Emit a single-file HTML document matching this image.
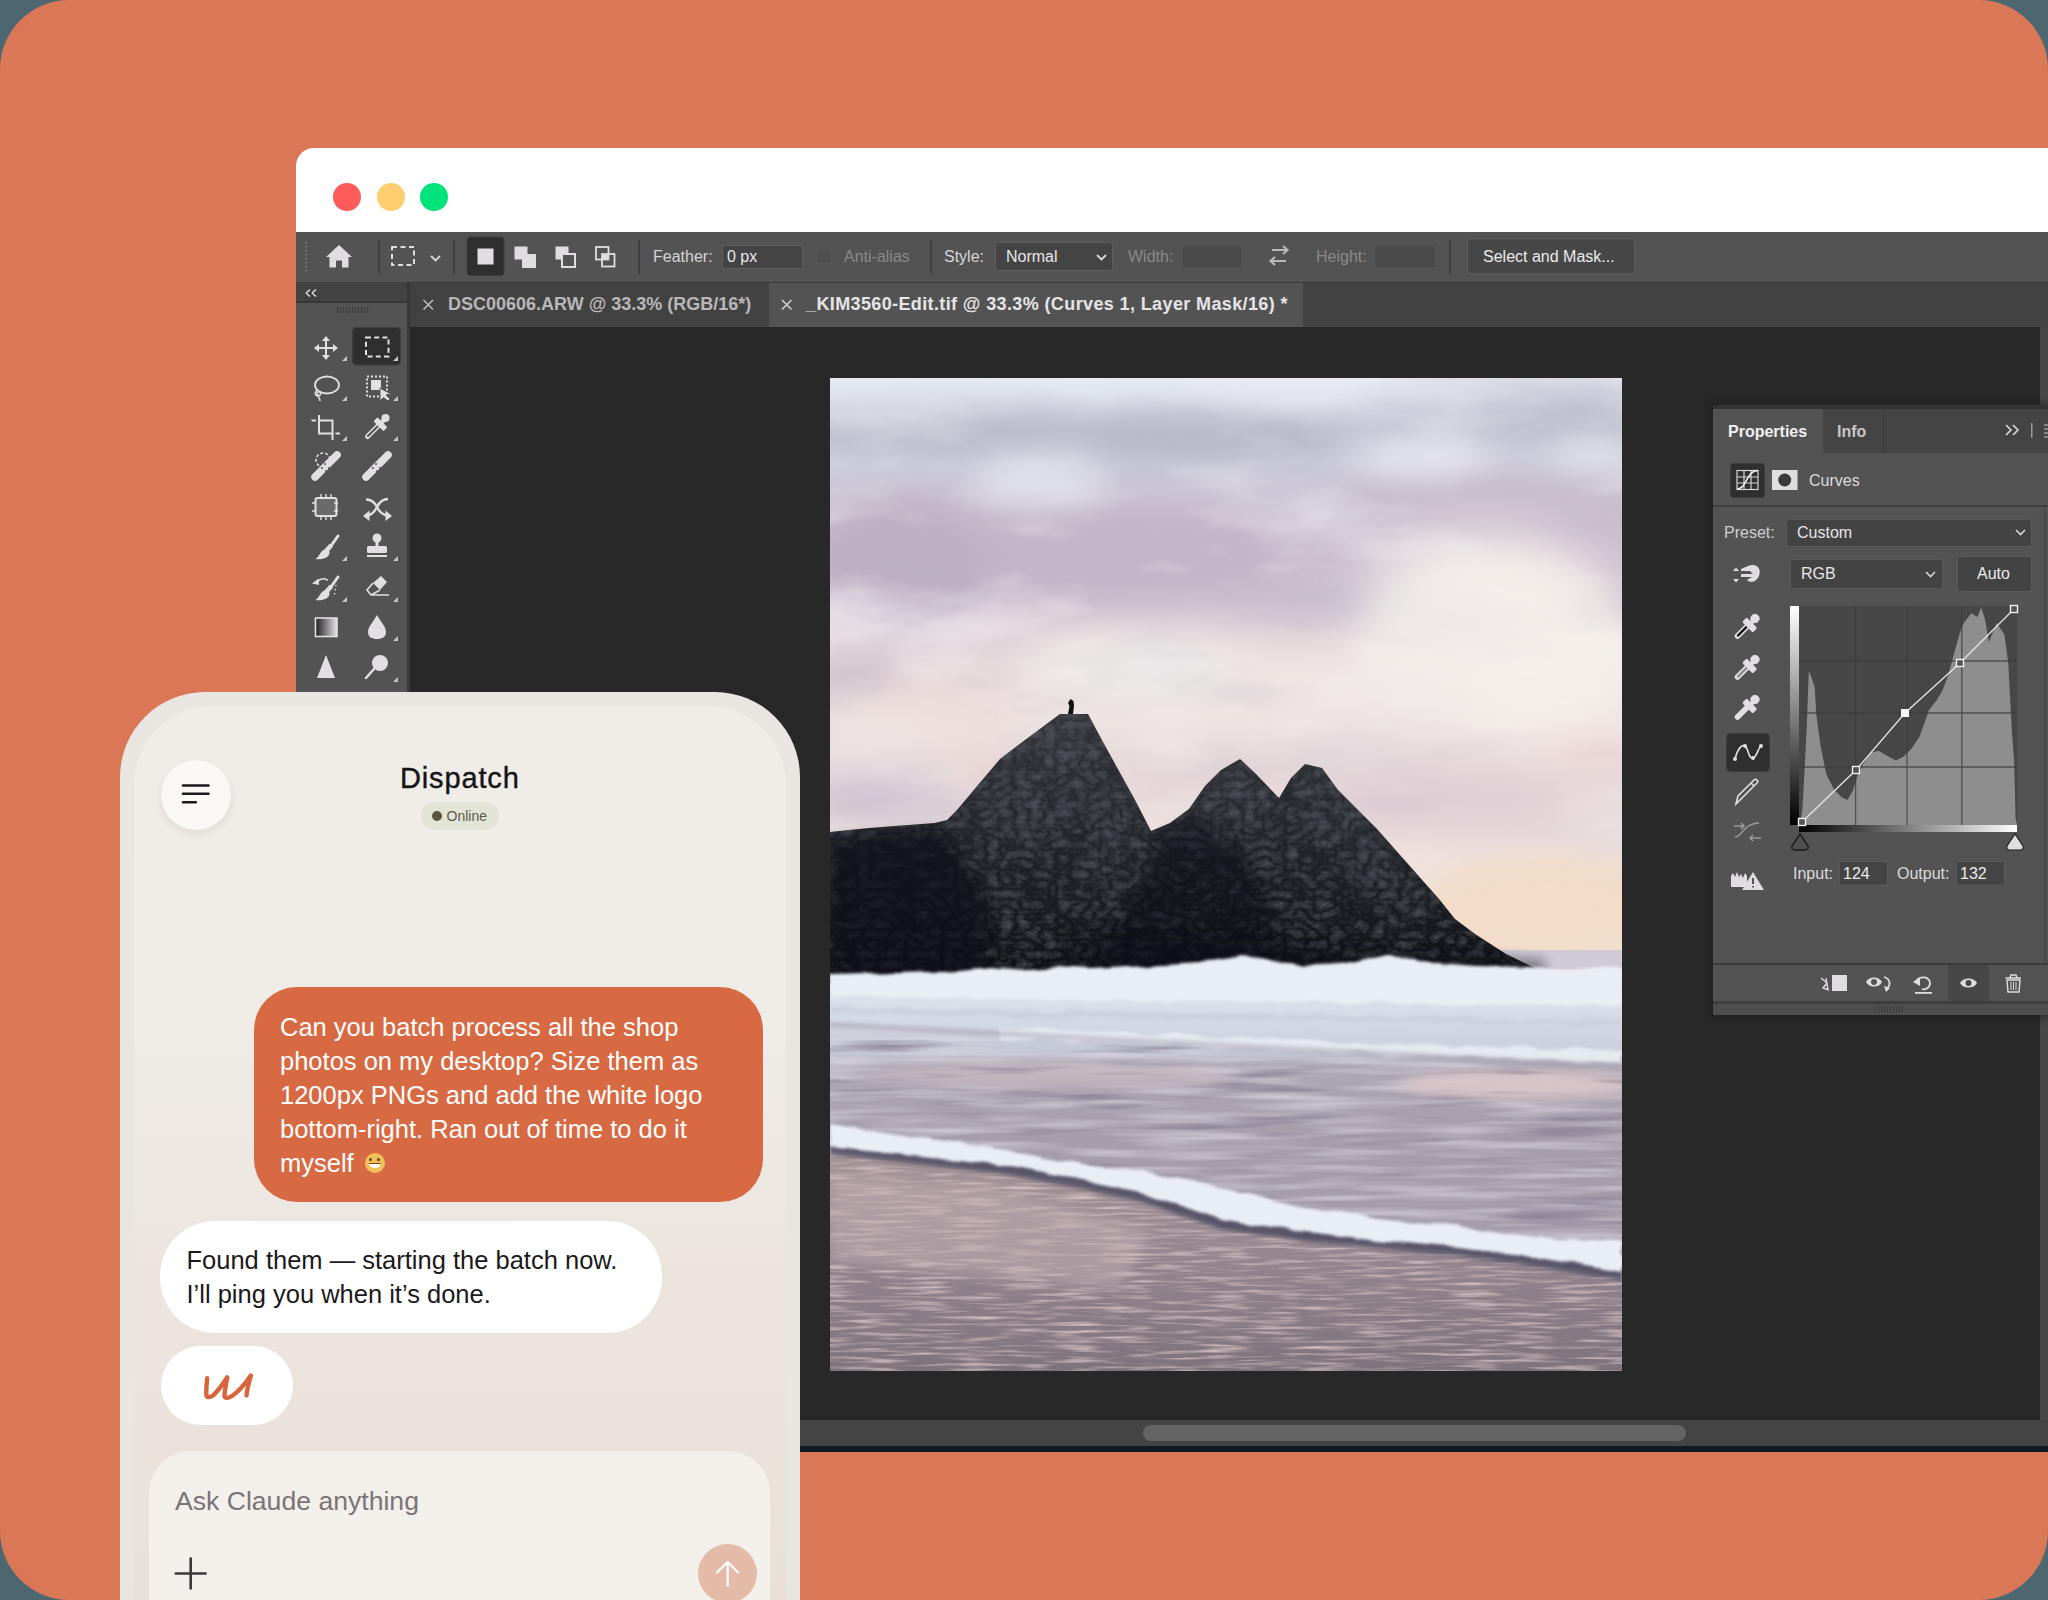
<!DOCTYPE html>
<html><head><meta charset="utf-8">
<style>
*{box-sizing:border-box;margin:0;padding:0}
html,body{width:2048px;height:1600px;overflow:hidden;background:#4d6770;font-family:"Liberation Sans",sans-serif}
.a{position:absolute}
#bg{position:absolute;left:0;top:0;width:2048px;height:1600px;background:#d97757;border-radius:69px}
#win{position:absolute;left:296px;top:148px;width:1752px;height:1304px;border-top-left-radius:18px;overflow:hidden;background:#282828}
.tl{position:absolute;top:183px;width:28px;height:28px;border-radius:50%}
.t{position:absolute;white-space:nowrap;font-size:16px;color:#d8d6d8;line-height:1}
.sep{position:absolute;width:2px;background:#3e3e3e}
#phone{position:absolute;left:120px;top:692px;width:680px;height:1100px;border-radius:85px;background:#e9e5e0}
#screen{position:absolute;left:134px;top:706px;width:652px;height:1100px;border-radius:78px;background:linear-gradient(#f0ece7 0%,#efebe6 30%,#ebe3dc 60%,#e8ddd4 100%);overflow:hidden}
</style></head><body>
<div id="bg"></div>

<!-- title bar -->
<div class="a" style="left:296px;top:148px;width:1752px;height:84px;background:#fff;border-top-left-radius:18px"></div>
<div class="tl" style="left:333px;background:#fd5c5a"></div>
<div class="tl" style="left:377px;background:#fdcf6e"></div>
<div class="tl" style="left:420px;background:#00e27a"></div>
<div class="a" style="left:296px;top:232px;width:1752px;height:1220px;background:#282828"></div>
<!-- toolbar -->
<div class="a" style="left:296px;top:232px;width:1752px;height:50px;background:#535353"></div>
<svg class="a" style="left:296px;top:232px" width="1752" height="50" viewBox="296 232 1752 50">
<g fill="#7a7a7a"><rect x="305" y="242" width="2" height="1.5"/><rect x="305" y="246" width="2" height="1.5"/><rect x="305" y="250" width="2" height="1.5"/><rect x="305" y="254" width="2" height="1.5"/><rect x="305" y="258" width="2" height="1.5"/><rect x="305" y="262" width="2" height="1.5"/><rect x="305" y="266" width="2" height="1.5"/><rect x="305" y="270" width="2" height="1.5"/></g>
<path fill="#e0dde0" d="M339 245 L352 257 L348.5 257 L348.5 267.5 L342 267.5 L342 260.5 L336 260.5 L336 267.5 L329.5 267.5 L329.5 257 L326 257 Z"/>
<rect x="378" y="240" width="2" height="34" fill="#3f3f3f"/>
<rect x="392" y="247" width="22" height="18" fill="none" stroke="#e0dde0" stroke-width="2" stroke-dasharray="5 3.5"/>
<path d="M431 256 L435.5 260.5 L440 256" fill="none" stroke="#d8d6d8" stroke-width="1.8"/>
<rect x="453" y="240" width="2" height="34" fill="#3f3f3f"/>
<rect x="467" y="237" width="37" height="38.5" rx="3" fill="#2f2f2f" stroke="#3e3e3e" stroke-width="1"/>
<rect x="477.5" y="248.5" width="16" height="16" fill="#e0dde0"/>
<rect x="514.5" y="246.5" width="13" height="13" fill="#e0dde0"/><rect x="522" y="254" width="14" height="14" fill="#e0dde0"/>
<rect x="555.5" y="246.5" width="13" height="13" fill="#e0dde0"/><rect x="562" y="254" width="13" height="13" fill="#535353" stroke="#e0dde0" stroke-width="2"/>
<rect x="596" y="247" width="12.5" height="12.5" fill="none" stroke="#e0dde0" stroke-width="1.8"/><rect x="602" y="254" width="12.5" height="12.5" fill="none" stroke="#e0dde0" stroke-width="1.8"/><rect x="602.5" y="254.5" width="6" height="5" fill="#e0dde0"/>
<rect x="638" y="240" width="2" height="34" fill="#3f3f3f"/>
<rect x="722.5" y="245.5" width="80" height="23" fill="#444" stroke="#5e5e5e" stroke-width="1"/>
<rect x="817" y="249" width="14" height="14.5" rx="3" fill="#4e4e4e" stroke="#5a5a5a" stroke-width="1"/>
<rect x="930" y="240" width="2" height="34" fill="#3f3f3f"/>
<rect x="995.5" y="242.5" width="117" height="28" rx="3" fill="#444" stroke="#5e5e5e" stroke-width="1"/>
<path d="M1097 255 L1101.5 259.5 L1106 255" fill="none" stroke="#d8d6d8" stroke-width="1.8"/>
<rect x="1181.5" y="245" width="61" height="23" fill="#4a4a4a" stroke="#5a5a5a" stroke-width="1"/>
<path d="M1272 250 L1287 250 M1283 246 L1287.5 250 L1283 254 M1286 261 L1271 261 M1275 257 L1270.5 261 L1275 265" fill="none" stroke="#b8b8b8" stroke-width="2.2"/>
<rect x="1374.5" y="245" width="61" height="23" fill="#4a4a4a" stroke="#5a5a5a" stroke-width="1"/>
<rect x="1449" y="240" width="2" height="34" fill="#3f3f3f"/>
<rect x="1467.5" y="239" width="167" height="35" rx="3" fill="#474747" stroke="#5e5e5e" stroke-width="1"/>
</svg>
<div class="t" style="left:653px;top:249px;font-size:16px;color:#d6d4d6">Feather:</div>
<div class="t" style="left:727px;top:249px;font-size:16px;color:#e8e6e8">0 px</div>
<div class="t" style="left:844px;top:249px;font-size:16px;color:#8a888a">Anti-alias</div>
<div class="t" style="left:944px;top:249px;font-size:16px;color:#d6d4d6">Style:</div>
<div class="t" style="left:1006px;top:249px;font-size:16px;color:#e8e6e8">Normal</div>
<div class="t" style="left:1128px;top:249px;font-size:16px;color:#8a888a">Width:</div>
<div class="t" style="left:1316px;top:249px;font-size:16px;color:#8a888a">Height:</div>
<div class="t" style="left:1483px;top:249px;font-size:16px;color:#eceaec">Select and Mask...</div>
<!-- tab row -->
<div class="a" style="left:410px;top:282px;width:1638px;height:45px;background:#424242"></div>
<div class="a" style="left:769px;top:283px;width:534px;height:44px;background:#535353"></div>
<div class="a" style="left:410px;top:282px;width:1638px;height:1px;background:#3a3a3a"></div>
<svg class="a" style="left:410px;top:282px" width="900" height="45" viewBox="410 282 900 45">
<path d="M423.5 300 L433 309.5 M433 300 L423.5 309.5" stroke="#bdbbbd" stroke-width="1.6"/>
<path d="M782 300 L791.5 309.5 M791.5 300 L782 309.5" stroke="#d0ced0" stroke-width="1.6"/>
</svg>
<div class="t" style="left:448px;top:295px;font-size:18px;font-weight:bold;color:#b9b7b9">DSC00606.ARW @ 33.3% (RGB/16*)</div>
<div class="t" style="left:806px;top:295px;font-size:18px;font-weight:bold;color:#e6e4e6;letter-spacing:.38px">_KIM3560-Edit.tif @ 33.3% (Curves 1, Layer Mask/16) *</div>
<!-- canvas -->

<!-- scroll -->
<div class="a" style="left:410px;top:1420px;width:1638px;height:26px;background:#444"></div>
<div class="a" style="left:1143px;top:1425px;width:543px;height:16px;border-radius:8px;background:#646464"></div>
<div class="a" style="left:296px;top:1446px;width:1752px;height:6px;background:#0f1a22"></div>
<!-- tools panel -->
<div class="a" style="left:296px;top:282px;width:111px;height:20px;background:#424242"></div>
<div class="a" style="left:296px;top:302px;width:111px;height:1150px;background:#535353"></div>
<div class="a" style="left:407px;top:282px;width:3px;height:1170px;background:#383838"></div>
<div class="a" style="left:296px;top:301px;width:111px;height:1.5px;background:#393939"></div>
<svg class="a" style="left:296px;top:282px" width="114" height="420" viewBox="296 282 114 420">
<defs><linearGradient id="gradtool" x1="0" x2="1"><stop offset="0" stop-color="#1e1e1e"/><stop offset="1" stop-color="#e6e2e6"/></linearGradient>
<path id="tri" d="M0 0 L-5 5 L0 5 Z" fill="#c8c6c8"/></defs>
<path d="M306 293 L310 289.5 M306 293 L310 296.5 M312 293 L316 289.5 M312 293 L316 296.5" stroke="#dcdadc" stroke-width="1.6" fill="none"/>
<g fill="#3e3e3e"><rect x="337" y="307" width="1.2" height="6"/><rect x="340" y="307" width="1.2" height="6"/><rect x="343" y="307" width="1.2" height="6"/><rect x="346" y="307" width="1.2" height="6"/><rect x="349" y="307" width="1.2" height="6"/><rect x="352" y="307" width="1.2" height="6"/><rect x="355" y="307" width="1.2" height="6"/><rect x="358" y="307" width="1.2" height="6"/><rect x="361" y="307" width="1.2" height="6"/><rect x="364" y="307" width="1.2" height="6"/><rect x="367" y="307" width="1.2" height="6"/></g>
<rect x="352.5" y="327.5" width="48" height="37.5" rx="4" fill="#2f2f2f" stroke="#3f3f3f"/>
<g fill="#e2dfe2" stroke="#e2dfe2">
<!-- move -->
<path d="M326 337 L326 359 M315 348 L337 348" stroke-width="2" fill="none"/>
<path d="M326 336 L330 341 L322 341 Z M326 360 L330 355 L322 355 Z M314 348 L319 344 L319 352 Z M338 348 L333 344 L333 352 Z" stroke="none"/>
<!-- marquee -->
<rect x="366" y="337.5" width="22.5" height="19" fill="none" stroke-width="2" stroke-dasharray="5 3.2"/>
<!-- lasso -->
<ellipse cx="327" cy="385" rx="12" ry="8.5" fill="none" stroke-width="1.8"/>
<path d="M317 390 C313 394 317 398 320 395 C322 393 319 390 317 393 C318 397 320 398 320 401" fill="none" stroke-width="1.5"/>
<!-- object select -->
<rect x="367" y="376.5" width="20" height="20" fill="none" stroke-width="2" stroke-dasharray="2 2"/>
<rect x="371" y="380" width="10" height="10" stroke="none"/>
<path d="M380 388 L380 401 L383.5 397.5 L388 401 L390 399 L386 395 L391 394 Z" stroke="#535353" stroke-width="1"/>
<!-- crop -->
<path d="M311.5 420.5 L316 420.5 M319 415 L319 433.5 L332.5 433.5 M335.5 433.5 L340 433.5 M319 420.5 L332.5 420.5 L332.5 440" fill="none" stroke-width="2"/>
<!-- eyedropper -->
<path d="M367.5 436.5 L378 426" stroke-width="5" stroke-linecap="round" fill="none"/>
<path d="M368 436 L377.5 426.5" stroke="#535353" stroke-width="2" stroke-linecap="round" fill="none"/>
<rect x="373.5" y="421.5" width="14" height="5.5" rx="1" transform="rotate(45 380.5 424.2)" stroke="none"/>
<circle cx="385.5" cy="418" r="4" stroke="none"/>
<path d="M381 423 L385 419" stroke-width="4.5" fill="none"/>
<!-- spot heal -->
<circle cx="323" cy="460" r="7" fill="none" stroke-width="1.6" stroke-dasharray="3 2"/>
<path d="M315 477 L337 455" stroke-width="7.5" stroke-linecap="round" fill="none"/>
<!-- heal -->
<path d="M366 477 L388 455" stroke-width="7.5" stroke-linecap="round" fill="none"/>
<!-- chip -->
<rect x="315.5" y="498" width="21" height="18" rx="2" fill="#6a6a6a" stroke-width="2"/>
<path d="M321 494 L321 521 M326 494 L326 521 M331 494 L331 521 M312 503 L340 503 M312 511 L340 511" stroke-width="1.4" fill="none" stroke-dasharray="4 18"/>
<!-- shuffle -->
<path d="M366 499.5 C372 499.5 375 503 377 507 C379 511 382 515 388 515.5" fill="none" stroke-width="2.4"/>
<path d="M388 499 C382 499 379 503 377 507 C375 511 372 515 367 515.5" fill="none" stroke-width="2.4"/>
<path d="M392 516 L385.5 510.5 L385.5 521 Z M363 516 L369.5 510.5 L369.5 521 Z" stroke="none"/>
<!-- brush -->
<path d="M338 536 L329.5 548" stroke-width="3" stroke-linecap="round" fill="none"/>
<path d="M331.5 545 L326.5 550.5" stroke-width="4.5" fill="none"/>
<path d="M325 549 C320 551 320 556 315.5 559 C322 560 329 558 329.5 553 C330 551 327 548 325 549 Z" stroke="none"/>
<!-- stamp -->
<circle cx="377" cy="538" r="4.5" stroke="none"/>
<rect x="375.5" y="541" width="3" height="6" stroke="none"/>
<rect x="367" y="546" width="20" height="7" rx="1.5" stroke="none"/>
<rect x="367" y="555" width="20" height="2" stroke="none"/>
<!-- history brush -->
<path d="M338 577 L329.5 589" stroke-width="3" stroke-linecap="round" fill="none"/>
<path d="M331.5 586 L326.5 591.5" stroke-width="4.5" fill="none"/>
<path d="M325 590 C320 592 320 597 315.5 600 C322 601 329 599 329.5 594 C330 592 327 589 325 590 Z" stroke="none"/>
<path d="M312 583.5 L318.5 578.5 L319 585 Z" stroke="none"/>
<path d="M317.5 581.5 C321 578 325.5 578 328 580.5" fill="none" stroke-width="1.6"/>
<path d="M336 585 L334 597" stroke-width="1.4" stroke-dasharray="1.5 2.5" fill="none"/>
<!-- eraser -->
<path d="M373 583 L381 576 L387 582 L380 590 Z" stroke="none"/>
<path d="M373 583 L367 590 L371 595 L389 595 M371 595 L380 590" fill="none" stroke-width="1.6"/>
<!-- gradient -->
<rect x="315.5" y="618" width="21.5" height="18.5" fill="url(#gradtool)" stroke-width="1.6"/>
<!-- drop -->
<path d="M377 615 C373 622 368 627 368 632 C368 637 372 639 377 639 C382 639 386 637 386 632 C386 627 381 622 377 615 Z" stroke="none"/>
<!-- triangle -->
<path d="M326 655 L335 678 L317 678 Z" stroke="none"/>
<!-- dodge -->
<circle cx="380" cy="663" r="8" stroke="none"/>
<path d="M374 669 L366 678" stroke-width="2.5" stroke-linecap="round" fill="none"/>
</g>
<g>
<use href="#tri" x="347" y="356"/><use href="#tri" x="398" y="356"/>
<use href="#tri" x="347" y="396"/><use href="#tri" x="398" y="396"/>
<use href="#tri" x="347" y="436"/><use href="#tri" x="398" y="436"/>
<use href="#tri" x="347" y="556"/><use href="#tri" x="398" y="556"/>
<use href="#tri" x="347" y="597"/><use href="#tri" x="398" y="597"/>
<use href="#tri" x="398" y="636"/><use href="#tri" x="398" y="677"/>
</g>
<g fill="#535353"><circle cx="320" cy="466" r="0"/></g>
<g fill="#5a5a5a"><circle cx="325" cy="464" r="1.1"/><circle cx="329" cy="468" r="1.1"/><circle cx="322" cy="468" r="1.1"/><circle cx="326" cy="471" r="1.1"/><circle cx="376" cy="464" r="1.1"/><circle cx="380" cy="468" r="1.1"/><circle cx="373" cy="468" r="1.1"/><circle cx="377" cy="471" r="1.1"/></g>
</svg>

<svg class="a" style="left:830px;top:378px" width="792" height="993" viewBox="830 378 792 993">
<defs>
<linearGradient id="sky" x1="0" y1="378" x2="0" y2="1371" gradientUnits="userSpaceOnUse">
<stop offset="0.0000" stop-color="#e6ebf2"/>
<stop offset="0.0222" stop-color="#dde1ea"/>
<stop offset="0.0524" stop-color="#c8c8d6"/>
<stop offset="0.0826" stop-color="#d0d1de"/>
<stop offset="0.1430" stop-color="#c9bdce"/>
<stop offset="0.2236" stop-color="#d0c3d0"/>
<stop offset="0.2739" stop-color="#e3d6da"/>
<stop offset="0.3444" stop-color="#ece1e0"/>
<stop offset="0.4048" stop-color="#e6d8da"/>
<stop offset="0.4753" stop-color="#efe2de"/>
<stop offset="0.5861" stop-color="#f3e0d0"/>
<stop offset="1.0000" stop-color="#f3e0d0"/>
</linearGradient>
<filter id="blur20" x="-50%" y="-50%" width="200%" height="200%"><feGaussianBlur stdDeviation="16"/></filter>
<filter id="blur8" x="-50%" y="-50%" width="200%" height="200%"><feGaussianBlur stdDeviation="6"/></filter>
<filter id="blur3" x="-20%" y="-50%" width="140%" height="200%"><feGaussianBlur stdDeviation="2"/></filter>
<filter id="blur15" x="-20%" y="-50%" width="140%" height="200%"><feGaussianBlur stdDeviation="1.2"/></filter>
<filter id="rock" x="0" y="0" width="100%" height="100%" color-interpolation-filters="sRGB">
<feTurbulence type="turbulence" baseFrequency="0.07 0.1" numOctaves="3" seed="11" result="n"/>
<feColorMatrix in="n" type="matrix" values="0 0 0 0 0.40  0 0 0 0 0.41  0 0 0 0 0.45  0.9 0 0 0 -0.12" result="m"/>
<feComposite in="m" in2="SourceGraphic" operator="in" result="c"/>
<feMerge><feMergeNode in="SourceGraphic"/><feMergeNode in="c"/></feMerge>
</filter>
<filter id="ripple" x="0" y="0" width="100%" height="100%" color-interpolation-filters="sRGB">
<feTurbulence type="fractalNoise" baseFrequency="0.02 0.3" numOctaves="2" seed="7" result="n"/>
<feColorMatrix in="n" type="matrix" values="0 0 0 0 0.84  0 0 0 0 0.76  0 0 0 0 0.76  0 0 0 2.2 -1.0" result="m"/>
<feComposite in="m" in2="SourceGraphic" operator="in" result="c"/>
<feMerge><feMergeNode in="SourceGraphic"/><feMergeNode in="c"/></feMerge>
</filter>
<filter id="streak" x="0" y="0" width="100%" height="100%" color-interpolation-filters="sRGB">
<feTurbulence type="fractalNoise" baseFrequency="0.008 0.12" numOctaves="2" seed="4" result="n"/>
<feColorMatrix in="n" type="matrix" values="0 0 0 0 0.88  0 0 0 0 0.86  0 0 0 0 0.9  0 0 0 1.5 -0.62" result="m"/>
<feComposite in="m" in2="SourceGraphic" operator="in" result="c"/>
<feMerge><feMergeNode in="SourceGraphic"/><feMergeNode in="c"/></feMerge>
</filter>
<linearGradient id="rockg" x1="0" y1="0" x2="0" y2="1">
<stop offset="0" stop-color="#323338"/>
<stop offset="0.35" stop-color="#26282d"/>
<stop offset="0.7" stop-color="#181b1f"/>
<stop offset="1" stop-color="#0d1013"/>
</linearGradient>
<linearGradient id="sea" x1="0" y1="0" x2="0" y2="1">
<stop offset="0" stop-color="#dfe4ec"/>
<stop offset="0.1" stop-color="#d2d8e2"/>
<stop offset="0.23" stop-color="#c3c7d3"/>
<stop offset="0.27" stop-color="#aea7b4"/>
<stop offset="0.5" stop-color="#a69dab"/>
<stop offset="1" stop-color="#a69dab"/>
</linearGradient>
<linearGradient id="sand" x1="0" y1="0" x2="0" y2="1">
<stop offset="0" stop-color="#a59498"/>
<stop offset="0.45" stop-color="#958690"/>
<stop offset="1" stop-color="#7e737d"/>
</linearGradient>
<filter id="cloudtex" x="0" y="0" width="100%" height="100%" color-interpolation-filters="sRGB">
<feTurbulence type="fractalNoise" baseFrequency="0.004 0.012" numOctaves="4" seed="21" result="n"/>
<feColorMatrix in="n" type="matrix" values="0 0 0 0 0.72  0 0 0 0 0.7  0 0 0 0 0.78  2.2 0 0 0 -1.05" result="m"/>
<feComposite in="m" in2="SourceGraphic" operator="in"/>
</filter>
<filter id="cloudtex2" x="0" y="0" width="100%" height="100%" color-interpolation-filters="sRGB">
<feTurbulence type="fractalNoise" baseFrequency="0.005 0.014" numOctaves="4" seed="5" result="n"/>
<feColorMatrix in="n" type="matrix" values="0 0 0 0 0.97  0 0 0 0 0.96  0 0 0 0 0.97  2.4 0 0 0 -1.2" result="m"/>
<feComposite in="m" in2="SourceGraphic" operator="in"/>
</filter>
<linearGradient id="cmask" x1="0" y1="378" x2="0" y2="900" gradientUnits="userSpaceOnUse"><stop offset="0" stop-color="#fff" stop-opacity="0.35"/><stop offset="0.5" stop-color="#fff" stop-opacity="0.8"/><stop offset="1" stop-color="#fff" stop-opacity="0"/></linearGradient>
<filter id="foamdisp" x="-5%" y="-30%" width="110%" height="160%" color-interpolation-filters="sRGB">
<feTurbulence type="fractalNoise" baseFrequency="0.03 0.08" numOctaves="2" seed="9" result="t"/>
<feDisplacementMap in="SourceGraphic" in2="t" scale="9" xChannelSelector="R" yChannelSelector="G" result="d"/>
<feGaussianBlur in="d" stdDeviation="1.6"/>
</filter>
<filter id="seastreak" x="0" y="0" width="100%" height="100%" color-interpolation-filters="sRGB">
<feTurbulence type="fractalNoise" baseFrequency="0.006 0.09" numOctaves="3" seed="13" result="n"/>
<feColorMatrix in="n" type="matrix" values="0 0 0 0 0.5  0 0 0 0 0.47  0 0 0 0 0.55  -2.6 0 0 0 1.15" result="m"/>
<feComposite in="m" in2="SourceGraphic" operator="in"/>
</filter>
<clipPath id="mclip"><path d="M830 832 L869 828 L935 823 L947 820 L957 810 L978 785 L1000 759 L1025 740 L1060 714 L1088 714 L1103 742 L1119 771 L1135 800 L1151 831 L1170 823 L1189 809 L1205 786 L1221 770 L1240 759 L1256 774 L1275 794 L1279 798 L1291 778 L1305 764 L1322 768 L1338 790 L1377 829 L1408 864 L1439 899 L1455 919 L1475 934 L1506 954 L1545 973 L1545 990 L830 990 Z"/></clipPath>
<filter id="facet" x="-20%" y="-20%" width="140%" height="140%" color-interpolation-filters="sRGB">
<feTurbulence type="turbulence" baseFrequency="0.09 0.06" numOctaves="3" seed="17" result="n"/>
<feColorMatrix in="n" type="matrix" values="0 0 0 0 0.33  0 0 0 0 0.34  0 0 0 0 0.38  0.8 0 0 0 -0.1" result="m"/>
<feGaussianBlur in="SourceGraphic" stdDeviation="8" result="b"/>
<feComposite in="m" in2="b" operator="in"/>
</filter>
<linearGradient id="foamg" x1="0" y1="985" x2="0" y2="1064" gradientUnits="userSpaceOnUse"><stop offset="0" stop-color="#dfe5ee"/><stop offset="0.5" stop-color="#d3d9e4"/><stop offset="1" stop-color="#c3c8d5"/></linearGradient>
<clipPath id="pclip"><rect x="830" y="378" width="792" height="993"/></clipPath>
</defs>
<g clip-path="url(#pclip)">
<rect x="830" y="378" width="792" height="993" fill="url(#sky)"/>
<g filter="url(#blur20)">
<ellipse cx="950" cy="435" rx="140" ry="22" fill="#babbca"/>
<ellipse cx="1200" cy="440" rx="140" ry="24" fill="#b8b8c8"/>
<ellipse cx="1560" cy="415" rx="90" ry="22" fill="#b9b9c9"/>
<ellipse cx="1040" cy="480" rx="70" ry="20" fill="#eff2f6"/>
<ellipse cx="1425" cy="458" rx="65" ry="14" fill="#eef0f5"/>
<ellipse cx="1590" cy="452" rx="40" ry="12" fill="#e9ecf2"/>
<ellipse cx="1100" cy="555" rx="200" ry="48" fill="#c2b5c7"/>
<ellipse cx="900" cy="565" rx="90" ry="70" fill="#beb1c3"/>
<ellipse cx="1480" cy="500" rx="150" ry="28" fill="#c6bbca"/>
<ellipse cx="1500" cy="645" rx="140" ry="85" fill="#f3ede9"/>
<ellipse cx="1220" cy="685" rx="150" ry="32" fill="#eee4e1"/>
<ellipse cx="860" cy="675" rx="50" ry="14" fill="#c6b8c7"/>
<ellipse cx="950" cy="705" rx="80" ry="20" fill="#ead9d8"/>
<ellipse cx="890" cy="805" rx="80" ry="16" fill="#cdc1cf"/>
<ellipse cx="1450" cy="800" rx="120" ry="35" fill="#e1d0d6"/>
<ellipse cx="1590" cy="745" rx="50" ry="16" fill="#eccfcb"/>
<ellipse cx="1545" cy="905" rx="120" ry="42" fill="#f3dcc8"/>
<ellipse cx="1130" cy="668" rx="110" ry="22" fill="#f3efea"/>
<ellipse cx="880" cy="778" rx="70" ry="11" fill="#c9bdcb"/>
<ellipse cx="975" cy="770" rx="25" ry="8" fill="#ecc9b9"/>
</g>
<rect x="830" y="378" width="792" height="520" fill="url(#cmask)" filter="url(#cloudtex)"/>
<rect x="830" y="378" width="792" height="520" fill="url(#cmask)" filter="url(#cloudtex2)"/>
<filter id="blur35" x="-50%" y="-50%" width="200%" height="200%"><feGaussianBlur stdDeviation="30"/></filter>
<g filter="url(#blur35)" opacity="0.85">
<ellipse cx="1480" cy="600" rx="120" ry="70" fill="#f4efeb"/>
<ellipse cx="1560" cy="680" rx="90" ry="60" fill="#f4efea"/>
<ellipse cx="1380" cy="700" rx="110" ry="40" fill="#f2ebe8"/>
<ellipse cx="1130" cy="672" rx="120" ry="25" fill="#f4f0ec"/>
<ellipse cx="900" cy="725" rx="90" ry="25" fill="#efe3df"/>
</g>
<g filter="url(#blur20)">
<ellipse cx="1550" cy="905" rx="110" ry="40" fill="#f3dcc8" opacity="0.8"/>
</g>
<rect x="1450" y="950" width="172" height="20" fill="#d0cad5"/>
<!-- mountain -->
<path filter="url(#rock)" fill="url(#rockg)" d="M830 832 L869 828 L935 823 L947 820 L957 810 L978 785 L1000 759 L1025 740 L1060 714 L1088 714 L1103 742 L1119 771 L1135 800 L1151 831 L1170 823 L1189 809 L1205 786 L1221 770 L1240 759 L1256 774 L1275 794 L1279 798 L1291 778 L1305 764 L1322 768 L1338 790 L1377 829 L1408 864 L1439 899 L1455 919 L1475 934 L1506 954 L1545 973 L1545 990 L830 990 Z"/>
<path filter="url(#blur8)" fill="#0c0f12" opacity="0.7" d="M830 840 L940 830 L975 880 L990 940 L985 990 L830 990 Z"/>
<path filter="url(#blur8)" fill="#0c0f12" opacity="0.5" d="M1160 840 L1200 815 L1240 850 L1270 900 L1285 990 L1090 990 L1120 920 Z"/>
<path filter="url(#blur8)" fill="#0c0f12" opacity="0.45" d="M1100 930 L1545 960 L1545 990 L1000 990 Z"/>
<g clip-path="url(#mclip)" filter="url(#facet)" fill="#fff">
<path d="M985 780 L1030 735 L1060 714 L1084 712 L1100 735 L1095 790 L1060 840 L1020 850 L985 820 Z"/>
<path d="M1095 790 L1120 770 L1140 815 L1150 870 L1120 910 L1085 880 Z"/>
<path d="M1205 790 L1240 759 L1256 774 L1272 800 L1255 850 L1215 845 L1195 815 Z"/>
<path d="M1295 778 L1322 768 L1340 792 L1380 835 L1420 880 L1440 910 L1395 925 L1345 880 L1305 830 Z"/>
</g>
<!-- person -->
<path fill="#111" d="M1068 714 L1069.5 706 L1068 703 L1070.5 699 L1073.5 701 L1074 706 L1073 714 Z"/>
<!-- sea -->
<rect filter="url(#streak)" x="830" y="985" width="792" height="300" fill="url(#sea)"/>
<g filter="url(#blur8)">
<ellipse cx="1520" cy="1085" rx="120" ry="14" fill="#d8c5c8"/>
<ellipse cx="1050" cy="1075" rx="180" ry="10" fill="#c4b7bf"/>
</g>
<!-- breaking wave foam -->
<rect x="830" y="1040" width="792" height="230" fill="#fff" filter="url(#seastreak)" opacity="0.9"/>
<path filter="url(#foamdisp)" fill="url(#foamg)" d="M830 985 L1622 985 L1622 1064 L1400 1052 L1100 1036 L830 1022 Z"/>
<path filter="url(#foamdisp)" fill="#e9eef4" d="M830 974 L900 972 L960 970 L990 967 L1010 969 L1060 966 L1090 968 L1200 962 L1240 955 L1270 958 L1300 966 L1340 964 L1389 954 L1420 962 L1480 966 L1622 969 L1622 1004 L1500 1006 L1300 1002 L1100 1000 L830 996 Z"/>
<path filter="url(#foamdisp)" fill="#c9ceda" opacity="0.7" d="M830 1008 L1000 1010 L1300 1014 L1622 1020 L1622 1026 L1300 1021 L1000 1017 L830 1014 Z"/>
<path filter="url(#foamdisp)" fill="#edf1f6" opacity="0.8" d="M1000 1028 L1200 1036 L1400 1044 L1622 1050 L1622 1062 L1400 1055 L1200 1046 L1000 1038 Z"/>
<path filter="url(#blur3)" fill="#9a95a6" opacity="0.45" d="M830 1022 L1100 1036 L1400 1052 L1622 1064 L1622 1070 L1400 1058 L1100 1042 L830 1028 Z"/>
<!-- sand -->
<path filter="url(#ripple)" fill="url(#sand)" d="M830.0 1152.0 L1006.0 1172.0 L1084.0 1187.0 L1142.5 1200.0 L1180.0 1213.0 L1220.6 1227.0 L1298.8 1238.0 L1377.0 1246.0 L1455.0 1253.0 L1533.0 1264.0 L1622.0 1278.0 L1622 1371 L830 1371 Z"/>
<path filter="url(#blur8)" fill="#c2b0b2" opacity="0.5" d="M830 1175 L1000 1190 L1150 1230 L1120 1290 L830 1260 Z"/>
<!-- shore dark line -->
<path filter="url(#blur3)" fill="#4f4e62" opacity="0.9" d="M830.0 1143.0 L1006.0 1162.0 L1084.0 1176.0 L1142.5 1189.0 L1180.0 1202.0 L1220.6 1215.0 L1298.8 1227.0 L1377.0 1236.0 L1455.0 1243.7 L1533.0 1252.0 L1622.0 1267.0 L1622.0 1280.0 L1533.0 1266.0 L1455.0 1255.0 L1377.0 1248.0 L1298.8 1240.0 L1220.6 1229.0 L1180.0 1215.0 L1142.5 1202.0 L1084.0 1189.0 L1006.0 1174.0 L830.0 1154.0 Z"/>
<!-- shore foam -->
<path filter="url(#foamdisp)" fill="#e9eef5" d="M830.0 1124.0 L1006.0 1150.0 L1084.0 1164.0 L1142.5 1172.0 L1180.0 1179.0 L1220.6 1188.0 L1298.8 1204.7 L1377.0 1218.0 L1455.0 1226.0 L1533.0 1237.0 L1622.0 1241.0 L1622.0 1271.0 L1533.0 1256.0 L1455.0 1247.7 L1377.0 1240.0 L1298.8 1231.0 L1220.6 1219.0 L1180.0 1206.0 L1142.5 1193.0 L1084.0 1180.0 L1006.0 1166.0 L830.0 1147.0 Z"/>
</g>
</svg>

<div class="a" style="left:2040px;top:327px;width:8px;height:1093px;background:#474747"></div>
<div class="a" style="left:1709px;top:402px;width:339px;height:617px;background:#1f1f1f;opacity:.6;filter:blur(3px)"></div>
<div class="a" style="left:1713px;top:405px;width:335px;height:610px;background:#535353;border-top:4px solid #333"></div>
<div class="a" style="left:1823px;top:409px;width:225px;height:44px;background:#444"></div>
<div class="a" style="left:1883px;top:409px;width:1px;height:44px;background:#3a3a3a"></div>
<div class="a" style="left:1713px;top:505px;width:335px;height:2px;background:#3f3f3f"></div>
<div class="a" style="left:2044px;top:507px;width:2px;height:457px;background:#474747"></div>
<div class="a" style="left:1713px;top:963px;width:335px;height:2px;background:#3c3c3c"></div>
<div class="a" style="left:1948px;top:965px;width:41px;height:37px;background:#474747"></div>
<div class="a" style="left:1713px;top:1001px;width:335px;height:3px;background:#3e3e3e"></div>
<div class="a" style="left:1713px;top:1004px;width:335px;height:11px;background:#4e4e4e"></div>
<svg class="a" style="left:1713px;top:405px" width="335" height="615" viewBox="1713 405 335 615">
<defs>
<linearGradient id="vgrad" x1="0" y1="0" x2="0" y2="1"><stop offset="0" stop-color="#fff"/><stop offset="1" stop-color="#000"/></linearGradient>
<linearGradient id="hgrad" x1="0" y1="0" x2="1" y2="0"><stop offset="0" stop-color="#000"/><stop offset="1" stop-color="#fff"/></linearGradient>
</defs>
<!-- tab header icons -->
<path d="M2006 425 L2011 430 L2006 435 M2013 425 L2018 430 L2013 435" fill="none" stroke="#dcdadc" stroke-width="1.6"/>
<rect x="2031" y="423" width="1.5" height="15" fill="#9a9a9a"/>
<path d="M2044 425 L2048 425 M2044 429 L2048 429 M2044 433 L2048 433 M2044 437 L2048 437" stroke="#c8c8c8" stroke-width="1.2"/>
<!-- curves icon -->
<rect x="1730.5" y="463.5" width="34" height="34" rx="3" fill="#2f2f2f" stroke="#3d3d3d"/>
<g stroke="#d8d6d8" stroke-width="1.2" fill="none"><rect x="1737" y="470.5" width="21" height="19"/><path d="M1737 477 L1758 477 M1737 483 L1758 483 M1744 470.5 L1744 489.5 M1751 470.5 L1751 489.5"/></g>
<path d="M1737 489 C1747 489 1746 471 1758 470.5" fill="none" stroke="#f0eef0" stroke-width="1.6"/>
<rect x="1772" y="470" width="25.5" height="20" fill="#e0dde0"/>
<circle cx="1784.7" cy="480" r="6.5" fill="#3a3a3a"/>
<!-- preset dropdown -->
<rect x="1786.5" y="519.5" width="245" height="27" rx="3" fill="#434343" stroke="#5a5a5a"/>
<path d="M2016 530 L2020.5 534.5 L2025 530" fill="none" stroke="#d8d6d8" stroke-width="1.6"/>
<!-- rgb row -->
<rect x="1790.5" y="559.5" width="152" height="29" rx="3" fill="#434343" stroke="#5a5a5a"/>
<path d="M1926 572 L1930.5 576.5 L1935 572" fill="none" stroke="#d8d6d8" stroke-width="1.6"/>
<rect x="1957.5" y="556.5" width="74" height="35" rx="3" fill="#434343" stroke="#5a5a5a"/>
<g fill="#e0dde0">
<path d="M1748 566 C1756 563 1762 568 1759 576 C1757 581 1751 584 1747 580 L1752 577 L1741 577 L1741 574 L1753 574 L1750 571 L1741 571 L1741 569 Z"/>
<path d="M1733 571 L1736 567.5 L1739 571 Z M1733 579 L1736 582.5 L1739 579 Z"/>
</g>
<!-- curves graph -->
<rect x="1799" y="606" width="218" height="219" fill="#474747"/>
<path fill="#8e8e8e" d="M1800.1 825.3 L1802.6 806.9 L1804.9 764.3 L1806.8 725.6 L1808.8 671.3 L1810.7 675.2 L1814.6 686.8 L1816.5 715.9 L1820.4 744.9 L1826.2 774.0 L1834.0 789.5 L1841.7 797.2 L1847.5 800.1 L1853.3 789.5 L1857.2 775.9 L1863.0 764.3 L1870.8 752.7 L1878.5 750.8 L1888.2 756.6 L1895.9 760.4 L1903.7 756.6 L1911.4 748.8 L1919.2 737.2 L1925.0 721.7 L1928.9 710.1 L1936.6 700.4 L1942.4 690.7 L1948.2 675.2 L1954.0 653.9 L1959.9 632.6 L1963.7 622.9 L1971.5 613.2 L1977.3 617.1 L1981.2 607.4 L1985.0 619.1 L1988.9 642.3 L1992.8 632.6 L1996.7 622.9 L2000.5 628.7 L2004.4 634.5 L2008.3 663.6 L2012.1 735.3 L2014.1 760.4 L2015.6 818.5 L2017.0 825.3 Z"/>
<g stroke="#3a3a3a" stroke-width="1.3" opacity="0.75"><path d="M1855.6 606 L1855.6 825 M1907 606 L1907 825 M1961.8 606 L1961.8 825 M1799 661 L2017 661 M1799 713 L2017 713 M1799 767 L2017 767"/></g>
<rect x="1790" y="606" width="9" height="219" fill="url(#vgrad)"/>
<rect x="1799" y="825" width="218" height="7" fill="url(#hgrad)"/>
<path d="M1802 822 L1856 770 L1905 713 L1960 663 L2014 609" fill="none" stroke="#e6e6e6" stroke-width="1.3"/>
<g fill="#535353" stroke="#f0f0f0" stroke-width="1.4"><rect x="1798.5" y="818.5" width="7" height="7"/><rect x="1852.5" y="766.5" width="7" height="7"/><rect x="1956.5" y="659.5" width="7" height="7"/><rect x="2010.5" y="605.5" width="7" height="7"/></g>
<rect x="1901" y="709" width="8" height="8" fill="#fafafa"/>
<path d="M1800 834 L1808 846 C1809 849 1807 850 1805 850 L1795 850 C1793 850 1791 849 1792 846 Z" fill="#4f4f4f" stroke="#1a1a1a" stroke-width="1.4"/>
<path d="M2015 834 L2023 846 C2024 849 2022 850 2020 850 L2010 850 C2008 850 2006 849 2007 846 Z" fill="#e0dde0" stroke="#222" stroke-width="1.2"/>
<!-- side tools -->
<g fill="#e2dfe2" stroke="#e2dfe2">
<g transform="translate(0 0)">
<path d="M1737.5 636 L1747.5 626" stroke="#e2dfe2" stroke-width="5.5" stroke-linecap="round" fill="none"/>
<path d="M1738 635.5 L1746.5 627" stroke="#111" stroke-width="2.4" stroke-linecap="round" fill="none"/>
<rect x="1742.7" y="622.2" width="14" height="5.5" rx="1" transform="rotate(45 1749.7 624.9)" fill="#e2dfe2"/>
<circle cx="1755" cy="618.5" r="4.2" fill="#e2dfe2"/>
<path d="M1750.5 623.5 L1754.5 619.5" stroke="#e2dfe2" stroke-width="4.5"/>
</g><g transform="translate(0 41)">
<path d="M1737.5 636 L1747.5 626" stroke="#e2dfe2" stroke-width="5.5" stroke-linecap="round" fill="none"/>
<path d="M1738 635.5 L1746.5 627" stroke="#8a8a8a" stroke-width="2.4" stroke-linecap="round" fill="none"/>
<rect x="1742.7" y="622.2" width="14" height="5.5" rx="1" transform="rotate(45 1749.7 624.9)" fill="#e2dfe2"/>
<circle cx="1755" cy="618.5" r="4.2" fill="#e2dfe2"/>
<path d="M1750.5 623.5 L1754.5 619.5" stroke="#e2dfe2" stroke-width="4.5"/>
</g><g transform="translate(0 81)">
<path d="M1737.5 636 L1747.5 626" stroke="#e2dfe2" stroke-width="5.5" stroke-linecap="round" fill="none"/>
<path d="M1738 635.5 L1746.5 627" stroke="#e2dfe2" stroke-width="2.4" stroke-linecap="round" fill="none"/>
<rect x="1742.7" y="622.2" width="14" height="5.5" rx="1" transform="rotate(45 1749.7 624.9)" fill="#e2dfe2"/>
<circle cx="1755" cy="618.5" r="4.2" fill="#e2dfe2"/>
<path d="M1750.5 623.5 L1754.5 619.5" stroke="#e2dfe2" stroke-width="4.5"/>
</g>
</g>
<rect x="1726.5" y="733.5" width="43" height="38" rx="4" fill="#2f2f2f" stroke="#3d3d3d"/>
<path d="M1735 759 C1738 748 1742 744 1745 746 C1749 749 1748 759 1753 758 C1757 757 1757 750 1761 746" fill="none" stroke="#e2dfe2" stroke-width="1.6"/>
<g fill="#e2dfe2"><circle cx="1735" cy="759" r="2"/><circle cx="1745" cy="746" r="2"/><circle cx="1753" cy="758" r="2"/><circle cx="1761" cy="746" r="2"/></g>
<path d="M1736 804 L1738 796 L1754 780 C1756 778 1759 781 1757 783 L1741 799 Z M1751 783 L1754 786" fill="none" stroke="#e2dfe2" stroke-width="1.6"/>
<path d="M1735 837 C1742 837 1744 823 1759 823" fill="none" stroke="#9a9a9a" stroke-width="1.5"/>
<path d="M1734 826 L1744 826 M1741 823 L1744 826 L1741 829 M1761 838 L1750 838 M1753 835 L1750 838 L1753 841" fill="none" stroke="#9a9a9a" stroke-width="1.5"/>
<path d="M1731 887 L1731 876 L1733 873 L1735 877 L1737 872 L1739 877 L1741 874 L1743 878 L1745 873 L1747 876 L1747 887 Z" fill="#e0dde0"/>
<path d="M1753 872 L1764 890 L1742 890 Z" fill="#e0dde0"/>
<path d="M1753 878 L1753 884 M1753 886 L1753 887.5" stroke="#444" stroke-width="1.8"/>
<rect x="1839.5" y="861.5" width="48" height="23.5" fill="#444" stroke="#5a5a5a"/>
<rect x="1956.5" y="861.5" width="48" height="23.5" fill="#444" stroke="#5a5a5a"/>
<!-- bottom icons -->
<g fill="#e0dde0">
<rect x="1832" y="975" width="15" height="16"/>
<path d="M1821 978 L1827 983 L1823 988 L1829 990 M1826 978 L1828 990" stroke="#e0dde0" stroke-width="1.4" fill="none"/>
<path d="M1866 982 C1869 976 1879 976 1882 982 C1879 988 1869 988 1866 982 Z"/>
<circle cx="1874" cy="982" r="3" fill="#535353"/>
<path d="M1884 977 C1891 979 1891 986 1886 989" stroke="#e0dde0" stroke-width="1.8" fill="none"/>
<path d="M1884 986 L1886 992 L1890 988 Z"/>
<path d="M1916 983 C1916 976 1930 975 1930 983 C1930 988 1925 990 1922 989" stroke="#e0dde0" stroke-width="1.8" fill="none"/>
<path d="M1913 982 L1920 977 L1920 986 Z"/>
<rect x="1915" y="992" width="17" height="1.8"/>
<path d="M1960 983 C1963 977 1974 977 1977 983 C1974 989 1963 989 1960 983 Z"/>
<circle cx="1968.5" cy="983" r="3" fill="#474747"/>
<path d="M2005.5 978 L2021 978 M2010 978 L2011 975 L2016 975 L2017 978" stroke="#e0dde0" stroke-width="1.4" fill="none"/>
<path d="M2007 980 L2008 992 L2019 992 L2020 980 Z" stroke="#e0dde0" stroke-width="1.4" fill="none"/>
<path d="M2011 982 L2011 990 M2013.5 982 L2013.5 990 M2016 982 L2016 990" stroke="#e0dde0" stroke-width="1"/>
</g>
<g fill="#3c3c3c"><rect x="1875" y="1006" width="1" height="6"/><rect x="1878" y="1006" width="1" height="6"/><rect x="1881" y="1006" width="1" height="6"/><rect x="1884" y="1006" width="1" height="6"/><rect x="1887" y="1006" width="1" height="6"/><rect x="1890" y="1006" width="1" height="6"/><rect x="1893" y="1006" width="1" height="6"/><rect x="1896" y="1006" width="1" height="6"/><rect x="1899" y="1006" width="1" height="6"/><rect x="1902" y="1006" width="1" height="6"/></g>
</svg>
<div class="t" style="left:1728px;top:423.5px;font-size:16px;font-weight:bold;color:#f2f0f2">Properties</div>
<div class="t" style="left:1837px;top:423.5px;font-size:16px;font-weight:bold;color:#c9c7c9">Info</div>
<div class="t" style="left:1809px;top:473px;font-size:16px;color:#dcdadc">Curves</div>
<div class="t" style="left:1724px;top:525px;font-size:16px;color:#cfcdcf">Preset:</div>
<div class="t" style="left:1797px;top:525px;font-size:16px;color:#e8e6e8">Custom</div>
<div class="t" style="left:1801px;top:566px;font-size:16px;color:#e8e6e8">RGB</div>
<div class="t" style="left:1977px;top:566px;font-size:16px;color:#eceaec">Auto</div>
<div class="t" style="left:1793px;top:866px;font-size:16px;color:#dcdadc">Input:</div>
<div class="t" style="left:1843px;top:866px;font-size:16px;color:#eceaec">124</div>
<div class="t" style="left:1897px;top:866px;font-size:16px;color:#dcdadc">Output:</div>
<div class="t" style="left:1960px;top:866px;font-size:16px;color:#eceaec">132</div>


<div id="phone"></div>
<div id="screen"></div>
<div class="a" style="left:160.5px;top:759.5px;width:70px;height:70px;border-radius:50%;background:#faf8f4;box-shadow:0 4px 10px rgba(60,40,20,.08)"></div>
<svg class="a" style="left:170px;top:770px" width="50" height="50" viewBox="170 770 50 50"><path d="M183 785.5 L208.5 785.5 M183 793.8 L208.5 793.8 M183 802.3 L195.8 802.3" stroke="#1b1b1b" stroke-width="2.6" stroke-linecap="round"/></svg>
<div class="t" style="left:400px;top:764px;font-size:29px;letter-spacing:.85px;color:#151515;-webkit-text-stroke:.4px #151515">Dispatch</div>
<div class="a" style="left:421px;top:802px;width:77.5px;height:28px;border-radius:14px;background:#e2e5d6"></div>
<div class="a" style="left:431.5px;top:811px;width:10px;height:10px;border-radius:50%;background:#5b5242"></div>
<div class="t" style="left:446.5px;top:809px;font-size:14px;color:#5d554c">Online</div>
<div class="a" style="left:254px;top:987px;width:508.5px;height:215px;border-radius:43px;background:#d86a43"></div>
<div class="a" style="left:280px;top:1010px;font-size:25.5px;line-height:34px;color:#fff;white-space:nowrap">Can you batch process all the shop<br>photos on my desktop? Size them as<br>1200px PNGs and add the white logo<br>bottom-right. Ran out of time to do it<br>myself <span style="display:inline-block;width:20px;height:20px;border-radius:50%;background:#f0c15a;vertical-align:-1px;margin-left:4px;position:relative"><span style="position:absolute;left:4px;top:10px;width:12px;height:5px;background:#fff;border-radius:0 0 6px 6px;border-top:1.5px solid #7a4a20"></span><span style="position:absolute;left:4.5px;top:5px;width:3px;height:3px;background:#6b4020;border-radius:50%"></span><span style="position:absolute;left:12.5px;top:5px;width:3px;height:3px;background:#6b4020;border-radius:50%"></span></span></div>
<div class="a" style="left:160px;top:1221px;width:502px;height:111.5px;border-radius:55px;background:#fff"></div>
<div class="a" style="left:186.5px;top:1243px;font-size:25.5px;line-height:34px;color:#1a1a1a;white-space:nowrap">Found them — starting the batch now.<br>I’ll ping you when it’s done.</div>
<div class="a" style="left:161px;top:1346px;width:132px;height:79px;border-radius:40px;background:#fff"></div>
<svg class="a" style="left:195px;top:1365px" width="70" height="45" viewBox="195 1365 70 45"><path d="M207.2 1378.3 C206.5 1385 206 1391 206.4 1395 C207 1398 210 1397.5 213 1395.5 C218 1391 223 1384 227.3 1377.3 C226 1384 224.5 1391 224.5 1396 C225 1399 229 1398 232 1396 C238 1392 245 1384 250.9 1375.5 C249 1382 247.2 1389 246.5 1395.4" fill="none" stroke="#d8653d" stroke-width="4.4" stroke-linecap="round" stroke-linejoin="round"/></svg>
<div class="a" style="left:149px;top:1451px;width:621px;height:220px;border-radius:42px;background:#f3efeb"></div>
<div class="t" style="left:175px;top:1487.5px;font-size:26.6px;color:#7a7477">Ask Claude anything</div>
<svg class="a" style="left:170px;top:1550px" width="50" height="50" viewBox="170 1550 50 50"><path d="M175.8 1573.5 L205.6 1573.5 M190.7 1558.5 L190.7 1588.5" stroke="#3a3a3a" stroke-width="2.6" stroke-linecap="round"/></svg>
<div class="a" style="left:698px;top:1543.5px;width:59px;height:59px;border-radius:50%;background:#e3bba8"></div>
<svg class="a" style="left:705px;top:1550px" width="45" height="45" viewBox="705 1550 45 45"><path d="M727.6 1586 L727.6 1562 M717 1572.5 L727.6 1562 L738.2 1572.5" fill="none" stroke="#fff" stroke-width="2.2" stroke-linecap="round" stroke-linejoin="round"/></svg>
</body></html>
